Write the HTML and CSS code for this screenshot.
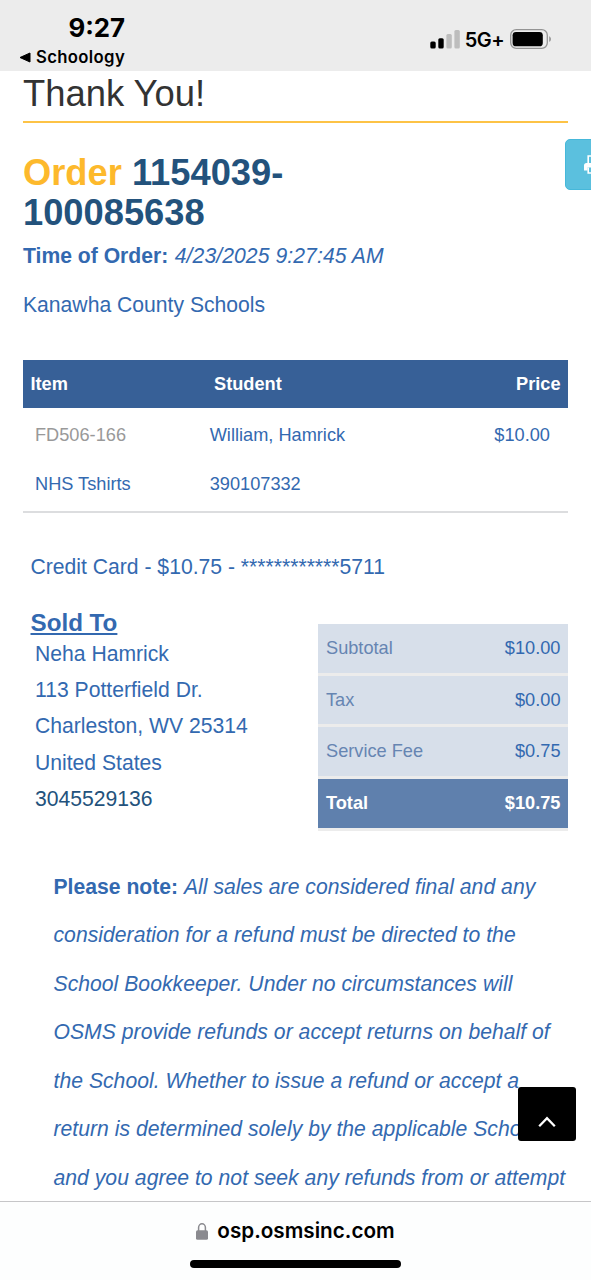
FILE: index.html
```
<!DOCTYPE html>
<html lang="en">
<head>
<meta charset="utf-8">
<title>Order confirmation</title>
<link rel="stylesheet" href="styles.css">
</head>
<body>
<div class="screen">
  <header class="status">
    <div class="status-left">
      <div class="clock">9:27</div>
      <div class="back"><svg width="12" height="11" viewBox="0 0 12 11"><path d="M11 1v9L1 5.5z" stroke="#000" stroke-linejoin="round" stroke-width="1"/></svg><span>Schoology</span></div>
    </div>
    <div class="status-right">
      <svg class="signal" width="31" height="20" viewBox="0 0 31 20"><rect x="0.3" y="11.5" width="5.4" height="7" rx="1.5"/><rect x="8.3" y="8.3" width="5.4" height="10.2" rx="1.5"/><rect x="16.4" y="4" width="5.4" height="14.5" rx="1.5" fill="#bdbdbd"/><rect x="24.4" y="0" width="5.4" height="18.5" rx="1.5" fill="#bdbdbd"/></svg>
      <span class="network">5G+</span>
      <svg width="42" height="20" viewBox="0 0 42 20"><rect x="0.7" y="0.7" width="36.6" height="18.6" rx="5.5" fill="none" stroke="#949494" stroke-width="1.3"/><rect x="2.6" y="2.9" width="30.2" height="14.4" rx="3.4"/><path d="M39.2 7.2c2.3.9 2.3 4.7 0 5.6z" fill="#949494"/></svg>
    </div>
  </header>

  <main class="page">
    <h1 class="title">Thank You!</h1>
    <h2 class="order"><span class="order-label">Order</span> 1154039-<br>100085638</h2>
    <p class="line"><b>Time of Order:</b> <i>4/23/2025 9:27:45 AM</i></p>
    <p class="line">Kanawha County Schools</p>

    <section class="items">
      <div class="items-head"><span>Item</span><span>Student</span><span class="right">Price</span></div>
      <div class="items-row">
        <div><div class="code">FD506-166</div><div>NHS Tshirts</div></div>
        <div><div>William, Hamrick</div><div>390107332</div></div>
        <div class="right">$10.00</div>
      </div>
    </section>

    <p class="line payment">Credit Card - $10.75 - ************5711</p>

    <section class="details">
      <div class="sold">
        <h3 class="sold-title">Sold To</h3>
        <div class="address">
          <div>Neha Hamrick</div>
          <div>113 Potterfield Dr.</div>
          <div>Charleston, WV 25314</div>
          <div>United States</div>
          <div class="phone">3045529136</div>
        </div>
      </div>
      <div class="totals">
        <div class="totals-row"><span>Subtotal</span><span class="amount">$10.00</span></div>
        <div class="totals-row"><span>Tax</span><span class="amount">$0.00</span></div>
        <div class="totals-row"><span>Service Fee</span><span class="amount">$0.75</span></div>
        <div class="totals-row grand"><span>Total</span><span>$10.75</span></div>
      </div>
    </section>

    <p class="note"><b>Please note:</b> <i>All sales are considered final and any<br>consideration for a refund must be directed to the<br>School Bookkeeper. Under no circumstances will<br>OSMS provide refunds or accept returns on behalf of<br>the School. Whether to issue a refund or accept a<br>return is determined solely by the applicable School<br>and you agree to not seek any refunds from or attempt</i></p>
  </main>

  <footer class="browser">
    <div class="url"><svg width="12" height="17" viewBox="0 0 12 17"><path d="M2.6 8V4.600a3.400 3.800 0 0 1 6.800 0V8" fill="none" stroke="#8a8a8f" stroke-width="1.500"/><rect x="0" y="7.200" width="12" height="9.600" rx="1.600" fill="#8a8a8f"/></svg><span>osp.osmsinc.com</span></div>
    <div class="home"></div>
  </footer>

  <div class="print"><svg width="20" height="19" viewBox="0 0 20 19"><path d="M4.200 9V1h8.800l2.800 2.800V9M4.200 12.500V18h11.600V12.500" fill="none" stroke="#fff" stroke-width="1.600"/><path d="M0 15.500V10.500a2.500 2.500 0 0 1 2.500-2.500h15A2.500 2.500 0 0 1 20 10.500v5h-3.500v-3h-13v3z" fill="#fff"/></svg></div>
  <div class="top"><svg width="18" height="12" viewBox="0 0 18 12"><path d="M1.200 10.200L9 2.200l7.800 8" fill="none" stroke="#fff" stroke-width="2.300"/></svg></div>
</div>
</body>
</html>
```
FILE: styles.css
```
* { box-sizing: border-box; }
body { margin: 0; background: #fff; }
h1, h2, h3, p { margin: 0; }
.screen {
  position: relative;
  width: 591px;
  height: 1280px;
  overflow: hidden;
  display: flex;
  flex-direction: column;
  font-family: "Liberation Sans", Arial, sans-serif;
  font-size: 21.150px;
  color: #3369b0;
}
.status {
  flex: none;
  height: 71px;
  background: #ececec;
  color: #000;
  font-family: Inter, sans-serif;
  display: flex;
  justify-content: space-between;
  padding: 12px 39px 0 19px;
}
.status-left { width: 107px; }
.clock { font-size: 25.800px; font-weight: 700; line-height: 31px; text-align: right; }
.back { display: flex; align-items: center; gap: 5px; font-size: 16.700px; font-weight: 600; line-height: 26px; letter-spacing: 0.350px; padding-top: 1px; }
.clock { margin-right: 1px; }
.status-right { display: flex; align-items: center; height: 20px; margin-top: 17px; }
.signal { margin-top: 2px; }
.network { font-size: 20px; font-weight: 600; margin: 1px 6px 0 4px; letter-spacing: -0.600px; }
.page { flex: 1; min-height: 0; overflow: hidden; padding: 2.700px 23px 0; }
.title {
  font-size: 36.400px;
  font-weight: 400;
  line-height: 40px;
  color: #333;
  padding-bottom: 7.300px;
  border-bottom: 2px solid #fdc346;
}
.order { font-size: 36.300px; line-height: 39.600px; color: #23527c; padding-top: 30.200px; }
.order-label { color: #fdb92c; }
.line { line-height: 48.500px; }
.line i { letter-spacing: 0.080px; margin-left: 0.600px; }
.items { margin-top: 30.200px; font-size: 18.200px; border-bottom: 2px solid #dcdddf; }
.items-head, .items-row { display: grid; grid-template-columns: 183.500px 1fr 130px; line-height: 48.500px; }
.items-head { background: #376097; color: #fff; font-weight: 700; padding: 0 7.500px; }
.items-row { grid-template-columns: 174.700px 1fr 130px; padding: 3px 18.000px 2.500px 12px; }
.right { text-align: right; }
.code { color: #999; }
.payment { padding: 30.500px 0 0 7.500px; }
.details { display: flex; justify-content: space-between; padding-top: 17px; }
.sold { padding-left: 7.500px; }
.sold-title { font-size: 24.200px; line-height: 27px; text-decoration: underline; text-decoration-thickness: 1.500px; text-underline-offset: 2px; }
.address { padding-left: 4.500px; line-height: 36.400px; }
.phone { color: #23527c; }
.totals { width: 250px; margin-top: 15.600px; font-size: 18.200px; }
.totals-row {
  display: flex;
  justify-content: space-between;
  line-height: 48.600px;
  padding: 0 7.500px 0 8px;
  background: #d7dfea;
  color: #6685b2;
  border-bottom: 3px solid #ececec;
}
.amount { color: #3369b0; }
.grand { background: #5f80ad; color: #fff; font-weight: 700; }
.note { padding: 32px 0 0 30.500px; line-height: 48.550px; white-space: nowrap; }
.note i { letter-spacing: 0.030px; }
.browser {
  flex: none;
  height: 79px;
  border-top: 1px solid #c6c6c8;
  background: #fdfefe;
  color: #000;
  font-family: Inter, sans-serif;
  display: flex;
  flex-direction: column;
  align-items: center;
}
.url { display: flex; align-items: center; gap: 9px; font-size: 20.700px; font-weight: 600; line-height: 24px; margin-top: 17px; }
.home { width: 211px; height: 8px; border-radius: 4px; background: #000; margin: 17px 0 0 0; }
.print {
  position: absolute;
  left: 565px;
  top: 138.500px;
  width: 60px;
  height: 51.500px;
  border-radius: 5px;
  background: #5bc0de;
  border: 1px solid #46b8da;
  padding: 15.500px 0 0 18px;
}
.top {
  position: absolute;
  left: 518px;
  top: 1087px;
  width: 58px;
  height: 53.500px;
  border-radius: 3px;
  background: #000;
  display: flex;
  justify-content: center;
  padding-top: 29px;
}
```
